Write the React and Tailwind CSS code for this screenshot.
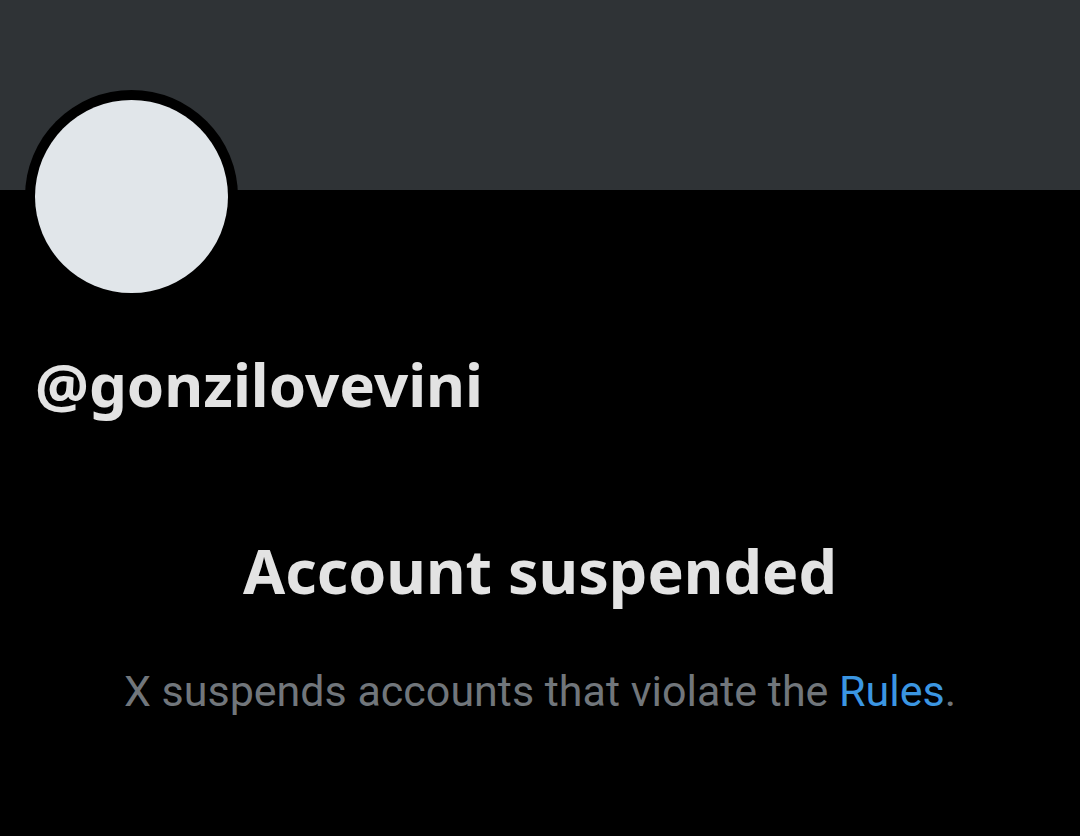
export default function App() {
  return (
    <div className="w-[1080px] h-[836px] bg-black overflow-hidden flex flex-col" style={{ fontFamily: '"Noto Sans", "Open Sans", sans-serif' }}>
      <div className="h-[190px] bg-[#2f3336] shrink-0" />
      <div className="relative px-[25px]">
        <div className="-mt-[100px] w-[213px] h-[213px] rounded-full bg-black p-[10px]">
          <div className="w-full h-full rounded-full bg-[#e1e6ea]" />
        </div>
      </div>
      <div className="pl-[35px] mt-[45px] text-[60px] leading-[72px] font-bold text-[#e3e3e3]">@gonzilovevini</div>
      <div className="mt-[115px] text-center text-[61px] leading-[72px] font-bold text-[#e3e3e3]">Account suspended</div>
      <div className="mt-[60px] text-center text-[43px] leading-[48px] text-[#71767b]" style={{ fontFamily: 'Roboto, sans-serif' }}>
        X suspends accounts that violate the <span className="text-[#3b96e2]">Rules</span>.
      </div>
    </div>
  );
}
